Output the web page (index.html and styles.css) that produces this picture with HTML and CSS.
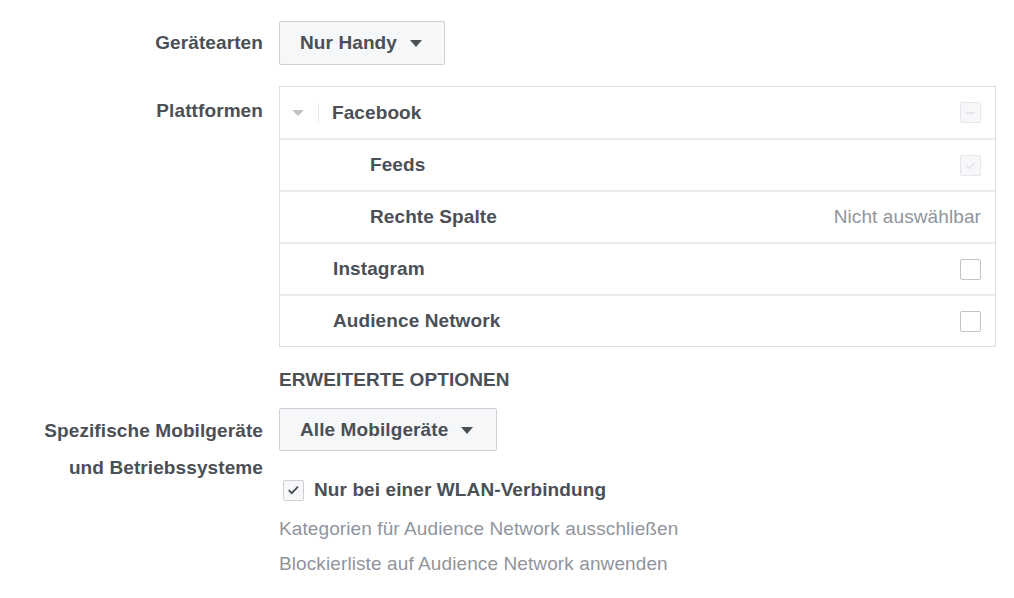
FILE: index.html
```html
<!DOCTYPE html>
<html>
<head>
<meta charset="utf-8">
<link rel="stylesheet" href="styles.css">
</head>
<body>
<div class="page">
  <div class="row row-device">
    <div class="label">Gerätearten</div>
    <div class="field">
      <button class="dropdown dd-device">Nur Handy <span class="caret"></span></button>
    </div>
  </div>

  <div class="row row-platforms">
    <div class="label label-plat">Plattformen</div>
    <div class="field">
      <div class="table">
        <div class="trow">
          <div class="tname fb">
            <span class="tri"></span><span class="sep"></span><span>Facebook</span>
          </div>
          <span class="cb cb-dis"><span class="dash"></span></span>
        </div>
        <div class="trow">
          <div class="tname sub">Feeds</div>
          <span class="cb cb-dis">
            <svg viewBox="0 0 20 20" width="20" height="20"><path d="M6 10.5l3 3 5.5-6" fill="none" stroke="#e4e6ea" stroke-width="1.6"/></svg>
          </span>
        </div>
        <div class="trow">
          <div class="tname sub">Rechte Spalte</div>
          <span class="na">Nicht auswählbar</span>
        </div>
        <div class="trow">
          <div class="tname">Instagram</div>
          <span class="cb"></span>
        </div>
        <div class="trow">
          <div class="tname">Audience Network</div>
          <span class="cb"></span>
        </div>
      </div>
      <div class="adv">ERWEITERTE OPTIONEN</div>
    </div>
  </div>

  <div class="row row-mobile">
    <div class="label label-mob">Spezifische Mobilgeräte<br>und Betriebssysteme</div>
    <div class="field">
      <button class="dropdown dd-mobile">Alle Mobilgeräte <span class="caret"></span></button>
      <label class="wlan">
        <span class="cb cb-on">
          <svg viewBox="0 0 20 20" width="20" height="20"><path d="M5 10.2l3.2 3.2 6.5-7" fill="none" stroke="#4b4f56" stroke-width="2"/></svg>
        </span>
        <span>Nur bei einer WLAN-Verbindung</span>
      </label>
      <a class="link link1">Kategorien für Audience Network ausschließen</a>
      <a class="link link2">Blockierliste auf Audience Network anwenden</a>
    </div>
  </div>
</div>
</body>
</html>
```
FILE: styles.css
```css
* { box-sizing: border-box; }
html, body { margin: 0; padding: 0; background: #fff; }
body {
  font-family: "Liberation Sans", Arial, Helvetica, sans-serif;
  color: #4b4f56;
  font-size: 19px;
  letter-spacing: 0.1px;
}
.page { width: 1014px; padding-top: 21px; }
.row { display: flex; }
.label {
  width: 263px;
  text-align: right;
  font-weight: bold;
  flex: none;
}
.field { margin-left: 16px; flex: 1; }

.dropdown {
  font-family: inherit;
  font-size: 19px;
  letter-spacing: 0.1px;
  font-weight: bold;
  color: #4b4f56;
  background: #f6f7f9;
  border: 1px solid #ced0d4;
  border-radius: 2px;
  height: 44px;
  padding: 0 20px;
  display: flex;
  align-items: center;
  gap: 13px;
  cursor: pointer;
}
.dd-device { width: 166px; }
.dd-mobile { width: 218px; height: 43px; }
.caret {
  width: 0; height: 0;
  border-left: 6.5px solid transparent;
  border-right: 6.5px solid transparent;
  border-top: 7px solid #4b4f56;
  margin-top: 1px;
}
.row-device .label { line-height: 44px; }

.row-platforms { margin-top: 21px; }
.label-plat { line-height: 50px; }
.table {
  width: 717px;
  border: 1px solid #dddfe2;
}
.trow {
  height: 52px;
  border-top: 2px solid #e9ebee;
  display: flex;
  align-items: center;
  justify-content: space-between;
  padding-left: 53px;
  padding-right: 14px;
  font-weight: bold;
}
.trow:first-child { border-top: none; height: 51px; }
.tname.sub { padding-left: 37px; }
.tname.fb {
  display: flex;
  align-items: center;
  margin-left: -41px;
}
.tri {
  width: 0; height: 0;
  border-left: 6.5px solid transparent;
  border-right: 6.5px solid transparent;
  border-top: 6px solid #bec2c9;
  margin-right: 14px;
}
.sep {
  width: 1px; height: 20px;
  background: #e9ebee;
  margin-right: 13px;
}
.cb {
  width: 21px; height: 21px;
  border: 1px solid #bec2c9;
  border-radius: 2px;
  background: #fff;
  display: flex;
  align-items: center;
  justify-content: center;
  flex: none;
}
.cb-dis { border-color: #e4e6ea; background: #f6f7f9; }
.dash { width: 9px; height: 2px; background: #e4e6ea; }
.na { font-weight: normal; color: #90949c; font-size: 19px; }

.adv {
  font-weight: bold;
  margin-top: 23px;
  height: 20px;
  line-height: 20px;
}

.row-mobile { margin-top: 18px; }
.label-mob { line-height: 37px; padding-top: 4px; }
.wlan {
  display: flex;
  align-items: center;
  margin-top: 28px;
  margin-left: 4px;
  font-weight: bold;
  gap: 10px;
}
.cb-on { width: 21px; height: 21px; border-color: #ced0d4; background: #f6f7f9; }
.link {
  display: block;
  color: #90949c;
}
.link1 { margin-top: 17px; }
.link2 { margin-top: 13px; }
```
